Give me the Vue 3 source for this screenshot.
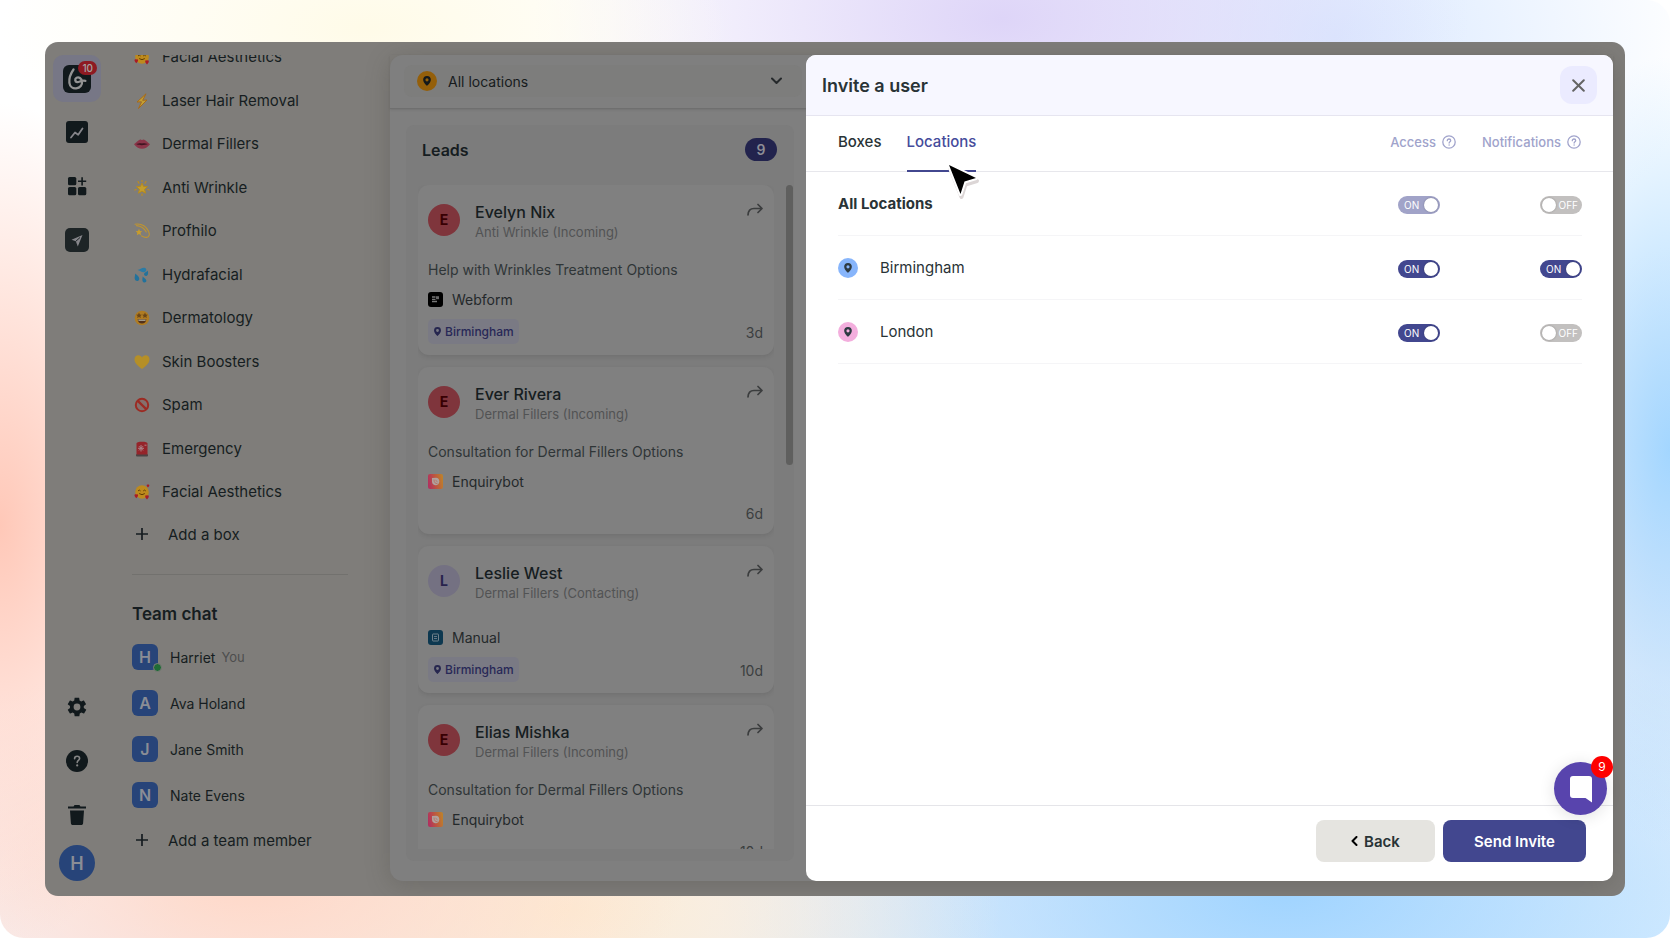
<script setup>
import { ref, reactive } from 'vue'

const boxes = [
  { icon: 'hearts', name: 'Facial Aesthetics' },
  { icon: 'bolt', name: 'Laser Hair Removal' },
  { icon: 'lips', name: 'Dermal Fillers' },
  { icon: 'glow', name: 'Anti Wrinkle' },
  { icon: 'dizzy', name: 'Profhilo' },
  { icon: 'drops', name: 'Hydrafacial' },
  { icon: 'starry', name: 'Dermatology' },
  { icon: 'heart', name: 'Skin Boosters' },
  { icon: 'ban', name: 'Spam' },
  { icon: 'siren', name: 'Emergency' },
  { icon: 'hearts', name: 'Facial Aesthetics' }
]

const team = [
  { name: 'Harriet', you: true },
  { name: 'Ava Holand' },
  { name: 'Jane Smith' },
  { name: 'Nate Evens' }
]

const leads = [
  { name: 'Evelyn Nix', box: 'Anti Wrinkle (Incoming)', subject: 'Help with Wrinkles Treatment Options', source: 'Webform', tag: 'Birmingham', age: '3d' },
  { name: 'Ever Rivera', box: 'Dermal Fillers (Incoming)', subject: 'Consultation for Dermal Fillers Options', source: 'Enquirybot', age: '6d' },
  { name: 'Leslie West', box: 'Dermal Fillers (Contacting)', source: 'Manual', tag: 'Birmingham', age: '10d', seen: true },
  { name: 'Elias Mishka', box: 'Dermal Fillers (Incoming)', subject: 'Consultation for Dermal Fillers Options', source: 'Enquirybot', age: '10d' }
]

const rows = reactive([
  { name: 'All Locations', all: true, access: true, notify: false },
  { name: 'Birmingham', color: 'blue', access: true, notify: true },
  { name: 'London', color: 'pink', access: true, notify: false }
])

const tab = ref('Locations')
const pinPath = 'M6 0a4.6 4.6 0 0 0-4.6 4.6C1.4 8 6 12 6 12s4.6-4 4.6-7.4A4.6 4.6 0 0 0 6 0zm0 6.5a1.9 1.9 0 1 1 0-3.8 1.9 1.9 0 0 1 0 3.8z'
</script>

<template>
  <div class="page">
    <div class="app">
      <nav class="rail" aria-label="Main">
        <button class="rail-btn logo" aria-label="Boxes">
          <svg width="28" height="28" viewBox="0 0 28 28">
            <rect width="28" height="28" rx="6" fill="#11191c" />
            <path d="M10.500 4.500C7.300 9 5.900 13.500 6.400 17.800c.5 3.900 3.500 5.900 6.700 5.600 4.100-.4 6.400-3.700 5.900-6.900-.5-3.100-3.200-4.800-5.400-3.700-2.100 1.100-1.700 4 .5 4.300 2.300.3 3.800-2 8.300-1.300" fill="none" stroke="#939393" stroke-width="2.300" stroke-linecap="round" stroke-linejoin="round" />
          </svg>
          <span class="badge">10</span>
        </button>
        <button class="rail-btn" aria-label="Reports">
          <svg width="22" height="22" viewBox="0 0 22 22">
            <rect width="22" height="22" rx="3" fill="#11191c" />
            <path d="M5 16.500l4-5 3.200 2.300L16.500 7.500" fill="none" stroke="#85858a" stroke-width="1.800" stroke-linejoin="round" stroke-linecap="round" />
          </svg>
        </button>
        <button class="rail-btn" aria-label="Apps">
          <svg width="20" height="20" viewBox="0 0 20 20" fill="#11191c">
            <rect x="1" y="1" width="8.300" height="8.300" rx="1.600" />
            <rect x="1" y="11" width="8.300" height="8.300" rx="1.600" />
            <rect x="11" y="11" width="8.300" height="8.300" rx="1.600" />
            <path d="M14.300 1.200h1.600v3.300h3.300v1.600h-3.300v3.300h-1.600V6.100H11V4.500h3.300z" />
          </svg>
        </button>
        <button class="rail-btn" aria-label="Campaigns">
          <svg width="24" height="24" viewBox="0 0 24 24">
            <rect width="24" height="24" rx="5" fill="#1d2426" />
            <path d="M17.500 7L6.500 11.800l4.300 1.500 2 5.200z" fill="#85858a" />
            <path d="M10.800 13.300L15 9.500" stroke="#1d2426" stroke-width="1" />
          </svg>
        </button>
        <div class="rail-gap"></div>
        <button class="rail-btn" aria-label="Settings">
          <svg width="22" height="22" viewBox="0 0 24 24" fill="#11191c">
            <path d="M19.400 13c.04-.3.060-.6.060-1s-.02-.7-.07-1l2.200-1.600c.2-.2.300-.4.200-.7l-2.100-3.500c-.1-.2-.4-.3-.6-.2l-2.600 1a7 7 0 0 0-1.700-1l-.4-2.700c0-.3-.3-.4-.5-.4H9.900c-.3 0-.5.200-.5.400L9 5a8 8 0 0 0-1.700 1l-2.600-1c-.2-.1-.5 0-.6.200L2 8.700c-.1.200-.1.500.1.700L4.400 11c-.1.300-.1.700-.1 1s0 .700.1 1l-2.200 1.600c-.2.200-.3.400-.2.700l2.100 3.500c.1.200.4.300.6.200l2.600-1a7 7 0 0 0 1.700 1l.4 2.700c0 .300.2.4.5.4h4.200c.3 0 .5-.1.500-.4L15 19a8 8 0 0 0 1.700-1l2.600 1c.2.100.5 0 .6-.2l2.100-3.500c.1-.2.100-.5-.1-.7zM12 15.700a3.700 3.700 0 1 1 0-7.400 3.700 3.700 0 0 1 0 7.400z" />
          </svg>
        </button>
        <button class="rail-btn" aria-label="Help">
          <svg width="22" height="22" viewBox="0 0 22 22">
            <circle cx="11" cy="11" r="11" fill="#11191c" />
            <path d="M8.600 8.800c0-1.500 1-2.500 2.500-2.500s2.500 1 2.500 2.200c0 1.900-2.400 2-2.400 4" fill="none" stroke="#858585" stroke-width="1.600" stroke-linecap="round" />
            <circle cx="11.200" cy="15.400" r="1.100" fill="#858585" />
          </svg>
        </button>
        <button class="rail-btn" aria-label="Trash">
          <svg width="20" height="22" viewBox="0 0 20 22" fill="#11191c">
            <path d="M1 2.600h5.600c.2-1 .8-1.600 1.600-1.600h3.600c.8 0 1.400.6 1.600 1.600H19v2H1zM3 6.400h14l-.9 12.800c-.1 1.200-.8 1.800-1.900 1.800H5.800c-1.100 0-1.800-.6-1.900-1.800z" />
          </svg>
        </button>
        <button class="me" aria-label="Profile">H</button>
      </nav>

      <aside class="side">
        <ul class="boxes">
          <li v-for="(b, i) in boxes" :key="i">
            <svg class="emoji" width="16" height="16" viewBox="0 0 16 16">
              <template v-if="b.icon === 'hearts'">
                <circle cx="8" cy="8" r="6.800" fill="#bd8a1d" />
                <path d="M4.300 6.600q1-1.300 2 0M9.500 6.600q1-1.300 2 0M5.500 9.800q2.500 2 5 0" fill="none" stroke="#553300" stroke-width=".9" stroke-linecap="round" />
                <path d="M14 .8c1-1 2.400.5 0 2.600-2.400-2-1-3.600 0-2.600zM2.300 10.600c1.300-1.400 3.300.8 0 3.600-3.300-2.800-1.300-5 0-3.600zM13 11.800c1.300-1.400 3.300.8 0 3.600-3.300-2.800-1.300-5 0-3.600z" fill="#a91c25" />
              </template>
              <path v-else-if="b.icon === 'bolt'" d="M12 .8L3 9l4.500-.2L4.500 15.500 13 7l-4.300.3z" fill="#c2a035" stroke="#a56a1c" stroke-width="1" stroke-linejoin="round" />
              <template v-else-if="b.icon === 'lips'">
                <path d="M0 8.200C3 6 5 3.500 6.400 3.600c.7 0 1 .5 1.600.5s.9-.5 1.600-.5C11 3.500 13 6 16 8.200c-2.500 3-5 4.500-8 4.500s-5.500-1.500-8-4.500z" fill="#8b3549" />
                <path d="M2 8.100c3-.8 4-.9 6-.6 2-.3 3-.2 6 .6-3 1.400-9 1.700-12 0z" fill="#3f1522" />
              </template>
              <template v-else-if="b.icon === 'glow'">
                <path d="M8 3l1.500 3.400 4 .3-3 2.600 1.100 3.900L8 11.200l-3.600 2 1.100-3.900-3-2.600 4-.3z" fill="#c39d2c" stroke="#b58a20" stroke-linejoin="round" />
                <path d="M4 1.500l1 1.800M8 .5v1M12 1.500l-1 1.800M.8 10l1.500-.5M15.200 10l-1.500-.5M8 13.800v1.700" stroke="#bb8c22" stroke-width="1.200" stroke-linecap="round" />
              </template>
              <template v-else-if="b.icon === 'dizzy'">
                <path d="M1 1.200c6-.8 11 2 13.500 7 1.500 3.200.8 6-2 6.200-1.700.1-3.500-.5-5-1.500M2.500 2.600C7 3 10.500 5.500 12.300 9" fill="none" stroke="#bf9430" stroke-width="1.100" stroke-linecap="round" />
                <path d="M5 5.800l.9 2.100 2.300.3-1.700 1.600.5 2.400-2.100-1.200-2 1.200.4-2.400L1.600 8.200l2.400-.3z" fill="#c79c2c" />
              </template>
              <template v-else-if="b.icon === 'drops'">
                <path d="M1.200 6.500c2 1.700 4.700 3.400 4 6-.6 2.200-4 2-4.500-.7-.2-1.600.4-3.500.5-5.300z" fill="#22729c" />
                <path d="M3.500 3c2.600-.6 4.300-2.600 7-2.300 2.200.3 2.600 3.300.3 4.200C8.400 5.800 6 3.800 3.500 3z" fill="#2b7ba5" />
                <path d="M13.800 3.500c.3 1.800 1 4.700-1.400 5.400-2 .5-3.200-1.900-1.600-3.100.9-.7 2.200-1 3-2.300zM8.600 9.500c1.400 1.500 3.700 2.400 3.800 4.300 0 2-3 2.200-3.800.4-.6-1.400.1-3 0-4.700z" fill="#22729c" />
              </template>
              <template v-else-if="b.icon === 'starry'">
                <circle cx="8" cy="8" r="7.300" fill="#b07c22" />
                <path d="M5 2.600l.9 1.900 2 .2-1.500 1.400.4 2L5 7.100l-1.800 1 .4-2-1.500-1.400 2-.2zM11 2.600l.9 1.900 2 .2-1.500 1.400.4 2-1.800-1-1.800 1 .4-2-1.500-1.400 2-.2z" fill="#6b4618" />
                <path d="M3.600 9.200h8.800c-.3 2.700-2 4.300-4.400 4.300s-4.100-1.600-4.400-4.300z" fill="#50301b" />
                <path d="M4.200 9.400h7.600l-.4 1.600H4.600z" fill="#a09a8a" />
              </template>
              <path v-else-if="b.icon === 'heart'" d="M8 15C2 10.800.5 8 .5 5.300.5 2.700 2.300 1.300 4.300 1.300c1.700 0 3 .9 3.700 2.300.7-1.400 2-2.300 3.700-2.300 2 0 3.800 1.400 3.800 4C15.500 8 14 10.800 8 15z" fill="#b58f27" />
              <template v-else-if="b.icon === 'ban'">
                <circle cx="8" cy="8" r="6.200" fill="#85706d" stroke="#9b2b23" stroke-width="2" />
                <path d="M3.600 3.600l8.800 8.800" stroke="#9b2b23" stroke-width="2.200" />
              </template>
              <template v-else>
                <rect x="2" y="13" width="12" height="2.500" rx="1" fill="#4c4344" />
                <path d="M2.500 2.500C2.500 1.300 4.500.7 8 .7s5.500.6 5.500 1.800V13.500h-11z" fill="#95242a" />
                <path d="M7 4v6.500M4 7.300h6M5 5.200l4 4.200M9 5.200L5 9.400M10.500 4.200h2" stroke="#aa8388" stroke-width="1" />
              </template>
            </svg>
            <a href="#">{{ b.name }}</a>
          </li>
        </ul>
        <button class="add">
          <svg width="12" height="12" viewBox="0 0 12 12"><path d="M6 0v12M0 6h12" stroke="#161c20" stroke-width="1.700" /></svg>
          Add a box
        </button>
        <hr class="rule" />
        <h2 class="side-title">Team chat</h2>
        <ul class="team">
          <li v-for="m in team" :key="m.name">
            <span class="initial">{{ m.name[0] }}<i v-if="m.you" class="online"></i></span>
            <a href="#">{{ m.name }}</a>
            <span v-if="m.you" class="you">You</span>
          </li>
        </ul>
        <button class="add">
          <svg width="12" height="12" viewBox="0 0 12 12"><path d="M6 0v12M0 6h12" stroke="#161c20" stroke-width="1.700" /></svg>
          Add a team member
        </button>
      </aside>

      <main class="board">
        <header class="board-head">
          <div class="picker">
            <span class="pin amber"><svg width="10" height="10" viewBox="0 0 12 12"><path :d="pinPath" /></svg></span>
            <select aria-label="Location">
              <option>All locations</option>
            </select>
            <svg width="11" height="8" viewBox="0 0 11 8"><path d="M1 1.500l4.500 4.500L10 1.500" fill="none" stroke="#25292b" stroke-width="2" stroke-linecap="round" stroke-linejoin="round" /></svg>
          </div>
        </header>
        <section class="column">
          <div class="column-head">
            <h2>Leads</h2>
            <span class="count">9</span>
          </div>
          <div class="column-body">
            <div class="cards">
              <article v-for="l in leads" :key="l.name" class="card">
                <div class="card-head">
                  <span class="avatar" :class="{ seen: l.seen }">{{ l.name[0] }}</span>
                  <div class="who">
                    <h3>{{ l.name }}</h3>
                    <p>{{ l.box }}</p>
                  </div>
                  <button class="forward" aria-label="Forward">
                    <svg width="16" height="14" viewBox="0 0 16 14" fill="none" stroke="#3b3d3e" stroke-width="1.700" stroke-linecap="round" stroke-linejoin="round"><path d="M1 12c.2-4.500 2-6.500 6-6.500h7.500M11 1.500l4 4-4 4" /></svg>
                  </button>
                </div>
                <p v-if="l.subject" class="subject">{{ l.subject }}</p>
                <div class="source">
                  <svg width="15" height="15" viewBox="0 0 15 15">
                    <template v-if="l.source === 'Webform'">
                      <rect width="15" height="15" rx="3" fill="#000" />
                      <path d="M4 5h3.500M4 7.300h3.500M4 9.500h5" stroke="#777" stroke-width="1.300" />
                      <path d="M8 4.200h3v3H8z" fill="#666" />
                    </template>
                    <template v-else-if="l.source === 'Enquirybot'">
                      <defs>
                        <linearGradient id="bot" x1="0" y1=".6" x2="1" y2=".4">
                          <stop offset="0" stop-color="#b0305f" />
                          <stop offset=".5" stop-color="#bd5540" />
                          <stop offset="1" stop-color="#bd802b" />
                        </linearGradient>
                      </defs>
                      <rect width="15" height="15" rx="2" fill="url(#bot)" />
                      <path d="M4 4l4-.2c2.200 0 3.300 1.700 3.300 3.700S9.700 11.300 7.700 11.300 4 9.700 4 7.700z" fill="#b0a19e" />
                      <path d="M6 5.500c0 3 1 4 3.500 4.200M7.500 6.200l2 1.600" stroke="#b96a58" stroke-width=".8" fill="none" />
                    </template>
                    <template v-else>
                      <rect width="15" height="15" rx="3" fill="#0d3850" />
                      <rect x="4.500" y="4" width="6" height="7" rx=".5" fill="none" stroke="#6f808a" />
                      <path d="M6 6.500h3M6 8.500h3" stroke="#6f808a" stroke-width=".9" />
                    </template>
                  </svg>
                  {{ l.source }}
                </div>
                <div class="card-foot" :class="{ tagged: l.tag }">
                  <span v-if="l.tag" class="tag"><svg width="9" height="9" viewBox="0 0 12 12"><path :d="pinPath" fill="#26264f" /></svg>{{ l.tag }}</span>
                  <time>{{ l.age }}</time>
                </div>
              </article>
            </div>
            <div class="track"><div class="thumb"></div></div>
          </div>
        </section>
      </main>

      <section class="drawer" role="dialog" aria-labelledby="dlg">
        <header class="drawer-head">
          <h1 id="dlg">Invite a user</h1>
          <button class="close" aria-label="Close">
            <svg width="13" height="13" viewBox="0 0 13 13"><path d="M1.200 1.200l10.600 10.600M11.800 1.200L1.200 11.800" stroke="#646464" stroke-width="2" stroke-linecap="round" /></svg>
          </button>
        </header>
        <div class="tabs">
          <button v-for="t in ['Boxes', 'Locations']" :key="t" class="tab" :class="{ on: tab === t }" @click="tab = t">
            {{ t }}
            <svg v-if="t === 'Locations'" class="cursor" width="38" height="42" viewBox="0 0 38 42">
              <path d="M5 5L32 18 20.500 21.500 16.500 34z" transform="translate(1 3)" fill="#d8d2d2" stroke="#dcd6d6" stroke-width="4" stroke-linejoin="round" />
              <path d="M5 5L32 18 20.500 21.500 16.500 34z" fill="#000" stroke="#fff" stroke-width="4" stroke-linejoin="round" paint-order="stroke" />
            </svg>
          </button>
          <span class="spacer"></span>
          <span v-for="h in ['Access', 'Notifications']" :key="h" class="hint">
            {{ h }}
            <button :aria-label="'About ' + h">
              <svg width="14" height="14" viewBox="0 0 14 14" fill="none" stroke="#a0a3cb" stroke-width="1.300"><circle cx="7" cy="7" r="6.200" /><path d="M5.300 5.700c0-1.100.7-1.700 1.700-1.700s1.700.7 1.700 1.500c0 1.200-1.600 1.200-1.600 2.500" stroke-linecap="round" /><circle cx="7.100" cy="10" r=".4" fill="#a0a3cb" stroke-width=".6" /></svg>
            </button>
          </span>
        </div>
        <ul class="perms">
          <li v-for="r in rows" :key="r.name">
            <span v-if="!r.all" class="pin" :class="r.color"><svg width="10" height="10" viewBox="0 0 12 12"><path :d="pinPath" /></svg></span>
            <span class="perm-name" :class="{ strong: r.all }">{{ r.name }}</span>
            <label v-for="k in ['access', 'notify']" :key="k" class="switch" :class="{ on: r[k], faded: r.all && r[k] }">
              <input v-model="r[k]" type="checkbox" :aria-label="r.name + ' ' + k" />
              <span>{{ r[k] ? 'ON' : 'OFF' }}</span>
              <i></i>
            </label>
          </li>
        </ul>
        <footer class="drawer-foot">
          <button class="btn back">
            <svg width="7" height="10" viewBox="0 0 7 10"><path d="M5.500 1L1.500 5l4 4" fill="none" stroke="#000" stroke-width="2" stroke-linejoin="round" stroke-linecap="round" /></svg>
            Back
          </button>
          <button class="btn send">Send Invite</button>
        </footer>
        <button class="chat" aria-label="Open chat">
          <svg width="24" height="28" viewBox="0 0 24 28"><path d="M4 1h16a3 3 0 0 1 3 3v23.500L16.500 23H4a3 3 0 0 1-3-3V4a3 3 0 0 1 3-3z" fill="#fff" /></svg>
          <span>9</span>
        </button>
      </section>
    </div>
  </div>
</template>

<style>
body {
  margin: 0;
  background: #fff;
}
</style>

<style scoped>
* {
  box-sizing: border-box;
}
.page {
  height: 100vh;
  padding: 42px 45px;
  border-radius: 24px;
  font-family: Inter, "Liberation Sans", sans-serif;
  font-size: 15px;
  color: #161d21;
  background:
    radial-gradient(ellipse 12% 45% at 0% 56%, #ffc8b8 0%, rgba(255, 200, 184, 0) 100%),
    radial-gradient(ellipse 26% 22% at 15% 94%, #ffd8c8 0%, rgba(255, 216, 200, 0) 100%),
    radial-gradient(ellipse 26% 24% at 34% 97%, #fdecd4 0%, rgba(253, 236, 212, 0) 100%),
    radial-gradient(ellipse 22% 16% at 22% 3%, #fffbe8 0%, rgba(255, 251, 232, 0) 100%),
    radial-gradient(ellipse 28% 28% at 60% 2%, #ded5f8 0%, rgba(222, 213, 248, 0) 100%),
    radial-gradient(ellipse 22% 28% at 80% 4%, #dae9ff 0%, rgba(218, 233, 255, 0) 100%),
    radial-gradient(ellipse 10% 42% at 100% 48%, #a3d6ff 0%, rgba(163, 214, 255, 0) 100%),
    radial-gradient(ellipse 34% 30% at 77% 95%, #a0d4ff 0%, rgba(160, 212, 255, 0) 100%),
    linear-gradient(165deg, #fff 0%, #fff 50%, #f4f1f8 72%, #def0ff 100%);
}
button {
  padding: 0;
  border: 0;
  background: none;
  font: inherit;
  color: inherit;
}
a {
  color: inherit;
  text-decoration: none;
}
ul {
  margin: 0;
  padding: 0;
  list-style: none;
}
h1, h2, h3, p {
  margin: 0;
}
svg {
  display: block;
  flex: none;
}
.app {
  position: relative;
  display: flex;
  height: 100%;
  padding: 13px 12px 15px 8px;
  border-radius: 13px;
  background: #7f7d7a;
  overflow: hidden;
}
.rail {
  display: flex;
  flex-direction: column;
  align-items: center;
  width: 48px;
  margin-right: 31px;
}
.rail-btn {
  display: grid;
  place-items: center;
  width: 48px;
  height: 54px;
}
.rail-btn.logo {
  position: relative;
  height: 47px;
  margin-bottom: 3px;
  border-radius: 10px;
  background: #777786;
}
.badge {
  position: absolute;
  top: 6px;
  right: 4px;
  padding: 0 4px;
  border-radius: 7px;
  background: #8e1a22;
  color: #a5a5a5;
  font-size: 10px;
  font-weight: 500;
  line-height: 14px;
}
.rail-gap {
  flex: 1;
}
.me {
  width: 36px;
  height: 36px;
  margin: 3px 0 0;
  border-radius: 50%;
  background: #274479;
  color: #8a8d95;
  font-size: 18px;
  font-weight: 600;
}
.side {
  display: flex;
  flex-direction: column;
  width: 216px;
  padding-bottom: 29px;
  margin-right: 42px;
  overflow: hidden;
}
.boxes {
  flex: 1;
  display: flex;
  flex-direction: column;
  justify-content: space-between;
  margin-top: -10px;
  font-size: 15px;
  line-height: 24px;
}
.boxes li {
  display: flex;
  align-items: center;
  gap: 12px;
  padding-left: 2px;
}
.add {
  display: flex;
  align-items: center;
  gap: 20px;
  height: 24px;
  padding-left: 4px;
  font-size: 15px;
}
.boxes + .add {
  margin-top: 18px;
}
.rule {
  width: 100%;
  margin: 28px 0 27px;
  border: 0;
  border-top: 1px solid #72716e;
}
.side-title {
  font-size: 17px;
  font-weight: 600;
  line-height: 24px;
}
.team {
  display: grid;
  gap: 20px;
  margin: 18px 0 20px;
}
.team li {
  display: flex;
  align-items: center;
}
.initial {
  position: relative;
  width: 26px;
  margin-right: 12px;
  border-radius: 6px;
  background: #274479;
  color: #8a8d95;
  font-size: 16px;
  font-weight: 600;
  line-height: 26px;
  text-align: center;
}
.online {
  position: absolute;
  right: -4px;
  bottom: -2px;
  width: 9px;
  height: 9px;
  border: 1px solid #7f7d7a;
  border-radius: 50%;
  background: #1f6b36;
}
.team a {
  font-size: 14px;
}
.you {
  margin-left: 6px;
  font-size: 13px;
  color: #4d4e4e;
}
.board {
  flex: 1;
  display: flex;
  flex-direction: column;
  border-radius: 13px;
  background: #7f7f7f;
  box-shadow: 0 4px 24px rgba(60, 60, 50, 0.25);
}
.board-head {
  padding: 10px 14px 11px;
  border-bottom: 1px solid #6f6f6f;
  box-shadow: 0 1px 2px rgba(60, 60, 60, 0.18);
}
.picker {
  display: flex;
  align-items: center;
  width: 398px;
  height: 32px;
  padding: 0 20px 0 13px;
  border-radius: 8px;
  background: #7d7d7c;
}
.picker select {
  flex: 1;
  height: 32px;
  margin-left: 11px;
  padding: 0;
  border: 0;
  appearance: none;
  background: none;
  font: inherit;
  font-size: 14px;
  color: #171b1d;
}
.pin {
  display: grid;
  place-items: center;
  width: 20px;
  height: 20px;
  border-radius: 50%;
  fill: #2d3a42;
}
.pin.amber {
  background: #945f0a;
  fill: #14191b;
}
.pin.blue {
  background: #87b5fb;
}
.pin.pink {
  background: #f3aedd;
}
.column {
  flex: 1;
  display: flex;
  flex-direction: column;
  width: 388px;
  min-height: 0;
  margin: 16px 16px 20px;
  padding: 13px 0 12px 12px;
  border-radius: 8px;
  background: #7c7c7c;
}
.column-head {
  display: flex;
  align-items: center;
  justify-content: space-between;
  padding: 0 17px 0 4px;
  margin-bottom: 24px;
}
.column-head h2 {
  font-size: 16px;
  font-weight: 600;
}
.count {
  width: 32px;
  border-radius: 12px;
  background: #22234d;
  color: #8d8d96;
  font-size: 14px;
  font-weight: 600;
  line-height: 23px;
  text-align: center;
}
.column-body {
  flex: 1;
  display: flex;
  min-height: 0;
  gap: 12px;
}
.cards {
  flex: 1;
  display: flex;
  flex-direction: column;
  gap: 12px;
  overflow: hidden;
}
.track {
  width: 8px;
}
.thumb {
  width: 7px;
  height: 280px;
  border-radius: 4px;
  background: #5f5f5e;
}
.card {
  flex: none;
  padding: 18px 11px 11px 10px;
  border-radius: 11px;
  background: #808080;
  box-shadow: 0 2px 4px rgba(50, 50, 50, 0.14);
}
.card-head {
  display: flex;
  align-items: flex-start;
}
.avatar {
  width: 32px;
  margin-top: 1px;
  border-radius: 50%;
  background: #7f353c;
  color: #380003;
  font-size: 14px;
  font-weight: 700;
  line-height: 32px;
  text-align: center;
}
.avatar.seen {
  background: #747182;
  color: #28234d;
}
.who {
  flex: 1;
  margin-left: 15px;
}
.who h3 {
  font-size: 16px;
  font-weight: 500;
  line-height: 18px;
}
.who p {
  margin-top: 2px;
  font-size: 13px;
  line-height: 18px;
  color: #525354;
}
.subject {
  margin-top: 19px;
  font-size: 14px;
  line-height: 20px;
  color: #2f3537;
}
.source {
  display: flex;
  align-items: center;
  gap: 9px;
  height: 20px;
  margin-top: 25px;
  font-size: 14px;
  color: #24292b;
}
.subject + .source {
  margin-top: 9px;
}
.card-foot {
  display: flex;
  align-items: center;
  height: 23px;
  margin-top: 9px;
}
.card-foot.tagged {
  height: 26px;
}
.tag {
  display: flex;
  align-items: center;
  gap: 3px;
  height: 25px;
  padding: 0 5px;
  border-radius: 5px;
  background: #7a7a84;
  color: #282857;
  font-size: 12px;
  font-weight: 500;
}
.card-foot time {
  margin-left: auto;
  padding-top: 4px;
  font-size: 14px;
  line-height: 18px;
  color: #3b3e3f;
}
.drawer {
  position: absolute;
  top: 13px;
  right: 12px;
  bottom: 15px;
  left: calc(50% - 29px);
  display: flex;
  flex-direction: column;
  border-radius: 10px;
  background: #fff;
  color: #293336;
}
.drawer-head {
  display: flex;
  align-items: center;
  justify-content: space-between;
  height: 61px;
  padding: 0 16px;
  border-bottom: 1px solid #e6e5f0;
  border-radius: 10px 10px 0 0;
  background: #f7f7ff;
}
.drawer-head h1 {
  font-size: 18px;
  font-weight: 600;
}
.close {
  display: grid;
  place-items: center;
  width: 37px;
  height: 38px;
  border-radius: 12px;
  background: #ebebff;
}
.tabs {
  display: flex;
  height: 56px;
  padding: 0 32px;
  border-bottom: 1px solid #e7e7ec;
}
.tab {
  position: relative;
  height: 56px;
  margin-right: 25px;
  padding-bottom: 4px;
  border-bottom: 2px solid transparent;
  font-size: 15px;
  font-weight: 500;
}
.tab.on {
  border-color: #42478f;
  color: #454b9b;
}
.cursor {
  position: absolute;
  top: 44px;
  left: 37px;
  z-index: 1;
}
.spacer {
  flex: 1;
}
.hint {
  display: flex;
  align-items: center;
  gap: 6px;
  margin-left: 26px;
  padding-bottom: 4px;
  font-size: 13px;
  font-weight: 500;
  color: #a0a3cb;
}
.perms {
  flex: 1;
  padding: 0 31px 0 32px;
}
.perms li {
  display: flex;
  align-items: center;
  height: 64px;
  border-bottom: 1px solid #f5f5f7;
}
.pin + .perm-name {
  margin-left: 22px;
}
.perm-name {
  flex: 1;
  font-size: 15px;
}
.perm-name.strong {
  font-weight: 700;
}
.switch {
  position: relative;
  display: flex;
  align-items: center;
  justify-content: space-between;
  flex-direction: row-reverse;
  width: 42px;
  height: 18px;
  margin: 2px 0 0 100px;
  padding: 0 4px 0 2px;
  border-radius: 9px;
  background: #c2c0bf;
  color: #fff;
  font-size: 10px;
  font-weight: 400;
}
.switch.on {
  flex-direction: row;
  padding: 0 2px 0 6px;
  background: #42478f;
}
.switch.faded {
  background: #a1a3c8;
}
.switch input {
  position: absolute;
  inset: 0;
  margin: 0;
  opacity: 0;
}
.switch i {
  width: 14px;
  height: 14px;
  border-radius: 50%;
  background: #fff;
  box-shadow: 0 0 2px rgba(0, 0, 0, 0.3);
}
.drawer-foot {
  display: flex;
  justify-content: flex-end;
  gap: 8px;
  height: 76px;
  padding: 14px 27px;
  border-top: 1px solid #e5e5e9;
}
.btn {
  display: flex;
  align-items: center;
  justify-content: center;
  gap: 6px;
  width: 119px;
  height: 42px;
  border-radius: 8px;
  font-size: 15px;
  font-weight: 600;
}
.back {
  background: #e5e4e0;
}
.send {
  width: 143px;
  background: #42478f;
  color: #fff;
}
.chat {
  position: absolute;
  right: 6px;
  bottom: 66px;
  display: grid;
  place-items: center;
  width: 53px;
  height: 53px;
  border-radius: 50%;
  background: #5844ad;
  box-shadow: 0 2px 16px rgba(0, 0, 0, 0.12);
}
.chat span {
  position: absolute;
  top: -6px;
  right: -6px;
  width: 22px;
  border-radius: 50%;
  background: #fe0000;
  color: #fff;
  font-size: 12px;
  line-height: 22px;
}
</style>
